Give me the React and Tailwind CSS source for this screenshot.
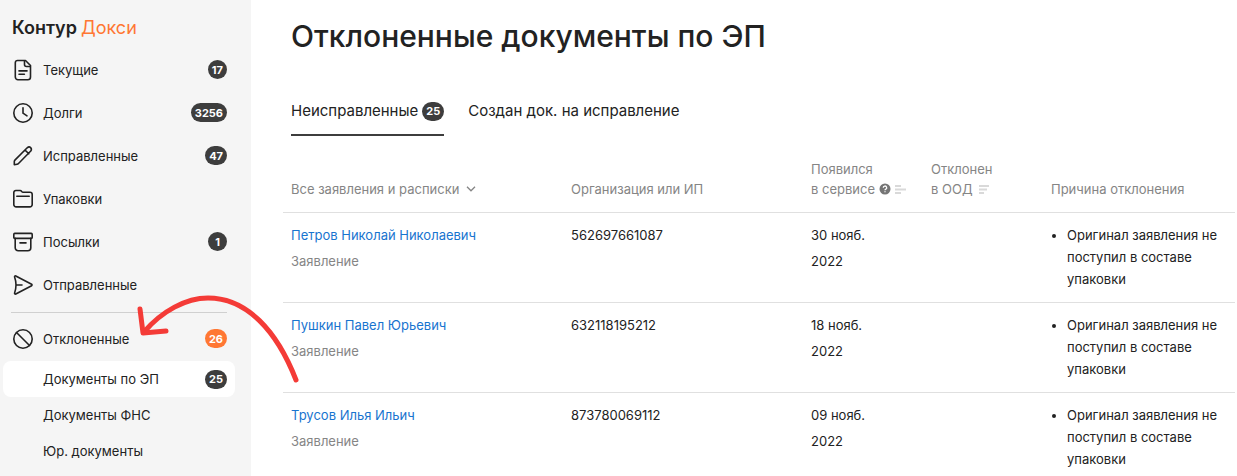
import { useState } from "react";
import clsx from "clsx";

const ICONS = {
  file: (
    <>
      <path d="M5.5 1.5h8l5 5V18a2.700 2.700 0 0 1-2.700 2.700H6A2.700 2.700 0 0 1 3.300 18V3.700a2.200 2.200 0 0 1 2.200-2.200z" />
      <path d="M12.500 1.800v3.700a2 2 0 0 0 2 2h3.700M7 11.900h8M7 15.200h5.400" />
    </>
  ),
  clock: (
    <>
      <circle cx="11" cy="11" r="9.200" />
      <path d="M11 5.800v5.400l4 2.600" />
    </>
  ),
  pencil: <path d="M2.300 19.700v-3.200q0-.8.6-1.400L15.200 2.800q1.900-1.600 3.400-.2t.2 3.400L6.500 18.500q-.6.600-1.400.7zM13 5l3.800 3.800" />,
  folder: (
    <>
      <path d="M3.800 2.500h4.400q.8 0 1.400.9t1.600.9h6.800a2.200 2.200 0 0 1 2.200 2.200V16.500a2.400 2.400 0 0 1-2.400 2.400H4.200a2.400 2.400 0 0 1-2.400-2.400V4.500a2 2 0 0 1 2-2z" />
      <path d="M4.800 8.300h12.400" />
    </>
  ),
  box: (
    <>
      <rect x="1.800" y="2.400" width="18.400" height="5" rx="1" />
      <path d="M3.200 7.400v9.400a3 3 0 0 0 3 3h9.600a3 3 0 0 0 3-3V7.400M8 11.900h6" />
    </>
  ),
  send: <path d="M3.800 2L19.600 10.300a.8.8 0 0 1 0 1.400L3.800 20a.9.9 0 0 1-1.200-1.100Q5.400 11 2.600 3.100A.9.9 0 0 1 3.800 2zM4.600 11h5.400" />,
  ban: (
    <>
      <circle cx="11" cy="11" r="9.200" />
      <path d="M4.500 4.500l13 13" />
    </>
  ),
};

const NAV = [
  { label: "Текущие", icon: "file", count: 17 },
  { label: "Долги", icon: "clock", count: 3256 },
  { label: "Исправленные", icon: "pencil", count: 47 },
  { label: "Упаковки", icon: "folder" },
  { label: "Посылки", icon: "box", count: 1 },
  { label: "Отправленные", icon: "send" },
];

const SUBNAV = [
  { label: "Документы по ЭП", count: 25, active: true },
  { label: "Документы ФНС" },
  { label: "Юр. документы" },
];

const ROWS = [
  { name: "Петров Николай Николаевич", org: "562697661087", day: "30 нояб.", year: "2022" },
  { name: "Пушкин Павел Юрьевич", org: "632118195212", day: "18 нояб.", year: "2022" },
  { name: "Трусов Илья Ильич", org: "873780069112", day: "09 нояб.", year: "2022" },
];

function Icon({ name }) {
  return (
    <svg
      viewBox="0 0 22 22"
      className="h-[22px] w-[22px] shrink-0"
      fill="none"
      stroke="currentColor"
      strokeWidth="1.6"
      strokeLinecap="round"
      strokeLinejoin="round"
      aria-hidden="true"
    >
      {ICONS[name]}
    </svg>
  );
}

function Badge({ children, accent }) {
  return (
    <span
      className={clsx(
        "inline-flex h-[19px] min-w-[19px] items-center justify-center rounded-full px-1 text-[11px] font-bold text-white",
        accent ? "bg-[#ff7733]" : "bg-[#3d3d3d]"
      )}
    >
      {children}
    </span>
  );
}

function NavItem({ item, accent }) {
  return (
    <a href="#" className="flex h-[43px] items-center pr-6 pl-3">
      <Icon name={item.icon} />
      <span className="ml-[9px] flex-1">{item.label}</span>
      {item.count && <Badge accent={accent}>{item.count}</Badge>}
    </a>
  );
}

function SortIcon({ shape }) {
  return (
    <svg viewBox="0 0 11 9" className="h-[9px] w-[11px]" fill="#d9d9d9" aria-hidden="true">
      {shape === "mid" ? (
        <path d="M0 0h6v2H0zM0 3.500h11v2H0zM0 7h6v2H0z" />
      ) : (
        <path d="M0 0h10v2H0zM0 3.500h8v2H0zM0 7h5v2H0z" />
      )}
    </svg>
  );
}

function Sidebar() {
  return (
    <aside className="w-[251px] shrink-0 bg-[#f5f5f5] text-[13px] leading-5">
      <a href="#" className="flex h-12 items-center gap-1 pt-2 pl-3 text-[18px]">
        <span className="font-semibold">Контур</span>
        <span className="text-[#ff7733]">Докси</span>
      </a>
      <nav>
        {NAV.map((item) => (
          <NavItem key={item.label} item={item} />
        ))}
        <hr className="mt-1.5 mr-6 mb-1 ml-[11px] border-[#d0d0d0]" />
        <NavItem item={{ label: "Отклоненные", icon: "ban", count: 26 }} accent />
        <div className="pt-px">
          {SUBNAV.map((item) => (
            <a
              key={item.label}
              href="#"
              className={clsx(
                "mr-4 ml-[3px] flex h-9 items-center justify-between rounded-lg pr-2 pl-10",
                item.active && "bg-white"
              )}
            >
              {item.label}
              {item.count && <Badge>{item.count}</Badge>}
            </a>
          ))}
        </div>
      </nav>
    </aside>
  );
}

function DocumentsTable() {
  return (
    <table className="w-full table-fixed text-left text-[13px]">
      <colgroup>
        <col className="w-[280px]" />
        <col className="w-[240px]" />
        <col className="w-[120px]" />
        <col className="w-[120px]" />
        <col />
      </colgroup>
      <thead>
        <tr className="border-b border-[#e0e0e0] align-bottom leading-5 text-[#858585] [&>th]:px-2 [&>th]:pb-[13px] [&>th]:font-normal">
          <th scope="col">
            <span className="flex items-center gap-1.5">
              <select aria-label="Тип документа" className="h-5 appearance-none bg-transparent">
                <option>Все заявления и расписки</option>
              </select>
              <svg viewBox="0 0 10 6" className="h-1.5 w-2.5" fill="none" stroke="currentColor" strokeWidth="1.3" aria-hidden="true">
                <path d="M1 .8l4 4 4-4" />
              </svg>
            </span>
          </th>
          <th scope="col">Организация или ИП</th>
          <th scope="col">
            Появился
            <span className="flex items-center gap-1 whitespace-nowrap">
              в сервисе
              <svg viewBox="0 0 12 12" className="h-3 w-3 shrink-0" aria-hidden="true">
                <circle cx="6" cy="6" r="5.500" fill="#757575" />
                <path d="M4.300 4.800a1.700 1.700 0 1 1 2.500 1.400q-.8.400-.8 1M6 8.300v1" fill="none" stroke="#fff" strokeWidth="1.300" />
              </svg>
              <button aria-label="Сортировать по дате появления">
                <SortIcon shape="mid" />
              </button>
            </span>
          </th>
          <th scope="col">
            Отклонен
            <span className="flex items-center gap-1.5">
              в ООД
              <button aria-label="Сортировать по дате отклонения">
                <SortIcon />
              </button>
            </span>
          </th>
          <th scope="col">Причина отклонения</th>
        </tr>
      </thead>
      <tbody>
        {ROWS.map((row) => (
          <tr
            key={row.org}
            className="h-[90px] border-b border-[#e0e0e0] align-top leading-[26px] [&>td]:px-2 [&>td]:pt-[9px]"
          >
            <td>
              <a href="#" className="text-[#1874cf]">
                {row.name}
              </a>
              <p className="text-[#858585]">Заявление</p>
            </td>
            <td>{row.org}</td>
            <td>
              {row.day}
              <br />
              {row.year}
            </td>
            <td />
            <td>
              <ul className="list-disc pt-0.5 pl-4 leading-[22px]">
                <li>Оригинал заявления не поступил в составе упаковки</li>
              </ul>
            </td>
          </tr>
        ))}
      </tbody>
    </table>
  );
}

export default function App() {
  const [tab, setTab] = useState("open");
  const tabClass = (id) =>
    clsx(
      "flex h-[45px] cursor-pointer items-center gap-1 border-b-2 pb-[3px]",
      tab === id ? "border-[#3d3d3d]" : "border-transparent"
    );

  return (
    <div className="relative flex h-screen overflow-hidden bg-white font-[Inter,'Noto_Sans',sans-serif] text-[#222]">
      <Sidebar />
      <main className="min-w-0 flex-1 pr-0.5 pl-8">
        <h1 className="px-2 pt-4 text-[30px] leading-10 font-medium">Отклоненные документы по ЭП</h1>
        <div role="tablist" className="mt-[35px] mb-[23px] flex gap-6 px-2 text-[15px]">
          <button role="tab" aria-selected={tab === "open"} className={tabClass("open")} onClick={() => setTab("open")}>
            Неисправленные <Badge>25</Badge>
          </button>
          <button role="tab" aria-selected={tab === "fixed"} className={tabClass("fixed")} onClick={() => setTab("fixed")}>
            Создан док. на исправление
          </button>
        </div>
        <DocumentsTable />
      </main>

      {/* Hint arrow pointing at the rejected section */}
      <svg
        viewBox="0 0 166 92"
        className="pointer-events-none absolute top-[293px] left-[135px] h-[92px] w-[166px]"
        fill="none"
        stroke="#f43b37"
        strokeWidth="5"
        strokeLinecap="round"
        strokeLinejoin="round"
        aria-hidden="true"
      >
        <path d="M161 87C142 38 112 5 73 5 51 5 27 18 9 39" />
        <path d="M5 16l3 24 23-2" />
      </svg>
    </div>
  );
}
